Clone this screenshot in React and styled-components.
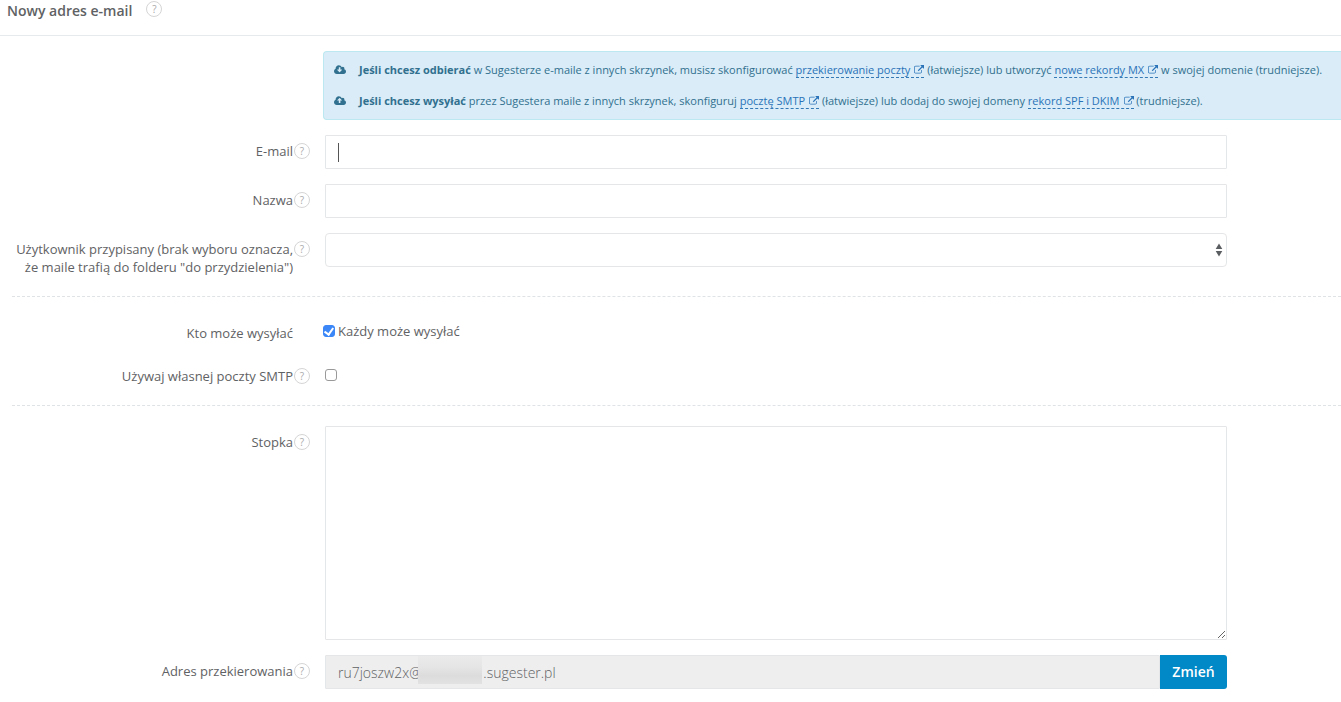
import React from "react";
import styled, { createGlobalStyle } from "styled-components";

const GlobalStyle = createGlobalStyle`
  * {
    box-sizing: border-box;
  }

  body {
    margin: 0;
    background: #fff;
    color: #5f6264;
    font-family: "Open Sans", "Liberation Sans", sans-serif;
    font-size: 13px;
    line-height: 18px;
    overflow-x: hidden;
  }
`;

const Header = styled.header`
  display: flex;
  align-items: flex-start;
  gap: 14px;
  height: 36px;
  padding: 1px 7px;
  border-bottom: 1px solid #e7eaec;
`;

const Title = styled.h1`
  margin: 0;
  font-size: 14px;
  font-weight: 600;
  line-height: 20px;
`;

const HelpButton = styled.button`
  flex: none;
  width: 16px;
  height: 16px;
  padding: 0;
  border: 1px solid #d5d5d5;
  border-radius: 50%;
  background: #fff;
  color: #aaa;
  font-family: inherit;
  font-size: 10px;
  line-height: 14px;
  text-align: center;
  cursor: help;
`;

const Form = styled.form`
  display: flex;
  flex-direction: column;
  gap: 15px;
  padding-top: 15px;
`;

const Alert = styled.section`
  display: flex;
  flex-direction: column;
  gap: 13px;
  margin-left: 323px;
  padding: 9px 0 9px 10px;
  border: 1px solid #bce8f1;
  border-right: none;
  border-radius: 4px 0 0 4px;
  background: #d9ecf7;
  color: #31708f;
  font-size: 11px;
  white-space: nowrap;
`;

const AlertLine = styled.p`
  display: flex;
  align-items: center;
  gap: 13px;
  margin: 0;
`;

const CloudSvg = styled.svg`
  flex: none;
  width: 12px;
  height: 12px;
  fill: currentColor;
`;

const AlertLink = styled.a`
  border-bottom: 1px dashed #337ab7;
  color: #2a73b9;
  text-decoration: none;
`;

const ExternalSvg = styled.svg`
  width: 10px;
  height: 10px;
  margin-left: 4px;
  fill: currentColor;
  vertical-align: -1px;
`;

const Row = styled.div`
  display: grid;
  grid-template-columns: 310px minmax(0, 1fr);
  column-gap: 15px;
  align-items: start;
  min-height: ${(props) => (props.$minHeight ? `${props.$minHeight}px` : "0")};
  padding-right: 114px;
`;

const LabelCell = styled.div`
  display: flex;
  justify-content: flex-end;
  align-items: flex-start;
  gap: 1px;
  padding-top: 7px;
  padding-left: 12px;
  padding-right: ${(props) => (props.$noHelp ? "17px" : "0")};
  text-align: right;

  ${HelpButton} {
    margin-top: 1px;
  }
`;

const TextInput = styled.input`
  display: block;
  width: 100%;
  height: 34px;
  padding: 6px 12px;
  border: 1px solid #e5e6e7;
  border-radius: 1px;
  outline: none;
  background: #fff;
  color: inherit;
  font-family: inherit;
  font-size: 14px;
`;

const CaretWrap = styled.div`
  position: relative;
`;

const EmailInput = styled(TextInput)`
  caret-color: ${(props) => (props.$empty ? "transparent" : "auto")};
`;

const Caret = styled.span`
  position: absolute;
  top: 8px;
  left: 13px;
  width: 1px;
  height: 19px;
  background: #555;
  pointer-events: none;
`;

const TextArea = styled.textarea`
  display: block;
  width: 100%;
  height: 214px;
  padding: 6px 12px;
  border: 1px solid #e5e6e7;
  border-radius: 1px;
  outline: none;
  color: inherit;
  font-family: inherit;
  font-size: 14px;
`;

const SelectWrap = styled.div`
  position: relative;
`;

const Select = styled.select`
  display: block;
  width: 100%;
  height: 34px;
  padding: 6px 12px;
  border: 1px solid #e5e6e7;
  border-radius: 4px;
  outline: none;
  background: #fff;
  color: inherit;
  font-family: inherit;
  font-size: 14px;
  appearance: none;
`;

const SelectArrows = styled.svg`
  position: absolute;
  top: 10px;
  right: 4px;
  width: 8px;
  height: 14px;
  fill: #5b5e60;
  pointer-events: none;
`;

const CheckCell = styled.div`
  display: flex;
  align-items: center;
  gap: 3px;
  padding-top: ${(props) => (props.$inline ? "5px" : "9px")};
  margin-left: ${(props) => (props.$inline ? "-2px" : "0")};
`;

const Checkbox = styled.input`
  display: grid;
  place-items: center;
  flex: none;
  width: 12px;
  height: 12px;
  margin: 0;
  border: 1px solid #999;
  border-radius: 3px;
  background: #fff;
  appearance: none;

  &:checked {
    border-color: #3b87f7;
    background: #3b87f7;
  }

  &:checked::before {
    content: "";
    width: 4px;
    height: 7px;
    margin-bottom: 2px;
    border: solid #fff;
    border-width: 0 2px 2px 0;
    transform: rotate(35deg);
  }
`;

const Divider = styled.hr`
  width: calc(100% - 12px);
  height: 1px;
  margin: 5px 0 5px 12px;
  border: none;
  border-top: 1px dashed #e0e3e5;
`;

const InputGroup = styled.div`
  position: relative;
  display: flex;
`;

const ReadOnlyInput = styled(TextInput)`
  flex: 1;
  background: #eee;
  font-weight: 300;
`;

// hides the account name in the middle of the address
const Redaction = styled.span`
  position: absolute;
  top: 1px;
  left: 93px;
  width: 64px;
  height: 28px;
  background: linear-gradient(#ebebeb, #e5e5e5 40%, #dcdcdc 70%, #e2e2e2);
`;

const ChangeButton = styled.button`
  flex: none;
  width: 67px;
  height: 34px;
  padding: 0;
  border: none;
  border-radius: 0 3px 3px 0;
  background: #0088c7;
  color: #fff;
  font-family: inherit;
  font-size: 14px;
  font-weight: 600;
  line-height: 18px;
  cursor: pointer;
`;

const CLOUD =
  "M1856 1152q0 159-112.5 271.5t-271.5 112.5h-1088q-185 0-316.5-131.5t-131.5-316.5q0-130 70-240t188-165q-2-30-2-43 0-212 150-362t362-150q156 0 285.5 87t188.5 231q71-62 166-62 106 0 181 75t75 181q0 76-41 138 130 31 213.5 135.5t83.5 238.5z";
const ARROW_DOWN =
  "M1216 864q0-14-9-23t-23-9h-224v-352q0-13-9.5-22.5t-22.5-9.5h-192q-13 0-22.5 9.5t-9.5 22.5v352h-224q-13 0-22.5 9.5t-9.5 22.5q0 14 9 23l352 352q9 9 23 9t23-9l351-351q10-12 10-24z";
const ARROW_UP =
  "M1216 800q0-14-9-23l-352-352q-9-9-23-9t-23 9l-351 351q-10 12-10 24 0 14 9 23t23 9h224v352q0 13 9.5 22.5t22.5 9.5h192q13 0 22.5-9.5t9.5-22.5v-352h224q13 0 22.5-9.5t9.5-22.5z";

const CloudIcon = ({ arrow }) => (
  <CloudSvg viewBox="-64 0 1920 1792" aria-hidden="true">
    <path fillRule="evenodd" d={CLOUD + arrow} />
  </CloudSvg>
);

const External = ({ children }) => (
  <AlertLink href="#">
    {children}
    <ExternalSvg viewBox="0 0 1792 1792" aria-hidden="true">
      <path d="M1408 928v320q0 119-84.5 203.5t-203.5 84.5h-832q-119 0-203.5-84.5t-84.5-203.5v-832q0-119 84.5-203.5t203.5-84.5h704q14 0 23 9t9 23v64q0 14-9 23t-23 9h-704q-66 0-113 47t-47 113v832q0 66 47 113t113 47h832q66 0 113-47t47-113v-320q0-14 9-23t23-9h64q14 0 23 9t9 23zm384-864v512q0 26-19 45t-45 19-45-19l-176-176-652 652q-10 10-23 10t-23-10l-114-114q-10-10-10-23t10-23l652-652-176-176q-19-19-19-45t19-45 45-19h512q26 0 45 19t19 45z" />
    </ExternalSvg>
  </AlertLink>
);

const Help = () => (
  <HelpButton type="button" aria-label="Pomoc">
    ?
  </HelpButton>
);

const Field = ({ id, label, noHelp, minHeight, children }) => (
  <Row $minHeight={minHeight}>
    <LabelCell $noHelp={noHelp}>
      <label htmlFor={id}>{label}</label>
      {!noHelp && <Help />}
    </LabelCell>
    {children}
  </Row>
);

const App = () => {
  const [email, setEmail] = React.useState("");
  const [focused, setFocused] = React.useState(true);
  const [everyone, setEveryone] = React.useState(true);
  const [ownSmtp, setOwnSmtp] = React.useState(false);

  return (
    <>
      <GlobalStyle />
      <Header>
        <Title>Nowy adres e-mail</Title>
        <Help />
      </Header>
      <Form onSubmit={(e) => e.preventDefault()}>
        <Alert>
          <AlertLine>
            <CloudIcon arrow={ARROW_DOWN} />
            <span>
              <b>Jeśli chcesz odbierać</b> w Sugesterze e-maile z innych
              skrzynek, musisz skonfigurować{" "}
              <External>przekierowanie poczty</External> (łatwiejsze) lub
              utworzyć <External>nowe rekordy MX</External> w swojej domenie
              (trudniejsze).
            </span>
          </AlertLine>
          <AlertLine>
            <CloudIcon arrow={ARROW_UP} />
            <span>
              <b>Jeśli chcesz wysyłać</b> przez Sugestera maile z innych
              skrzynek, skonfiguruj <External>pocztę SMTP</External>{" "}
              (łatwiejsze) lub dodaj do swojej domeny{" "}
              <External>rekord SPF i DKIM</External> (trudniejsze).
            </span>
          </AlertLine>
        </Alert>

        <Field id="email" label="E-mail">
          <CaretWrap>
            <EmailInput
              id="email"
              type="text"
              autoFocus
              value={email}
              $empty={email === ""}
              onChange={(e) => setEmail(e.target.value)}
              onFocus={() => setFocused(true)}
              onBlur={() => setFocused(false)}
            />
            {focused && email === "" && <Caret />}
          </CaretWrap>
        </Field>
        <Field id="name" label="Nazwa">
          <TextInput id="name" type="text" />
        </Field>
        <Field
          id="user"
          label={
            <>
              Użytkownik przypisany (brak wyboru oznacza,
              <br />
              że maile trafią do folderu "do przydzielenia")
            </>
          }
        >
          <SelectWrap>
            <Select id="user">
              <option value=""></option>
            </Select>
            <SelectArrows viewBox="0 0 8 14" aria-hidden="true">
              <path d="M4 0.5L7.3 6H0.7zM4 13.5L7.3 8H0.7z" />
            </SelectArrows>
          </SelectWrap>
        </Field>

        <Divider />

        <Field id="everyone" label="Kto może wysyłać" noHelp minHeight={28}>
          <CheckCell $inline>
            <Checkbox
              id="everyone"
              type="checkbox"
              checked={everyone}
              onChange={() => setEveryone(!everyone)}
            />
            <label htmlFor="everyone">Każdy może wysyłać</label>
          </CheckCell>
        </Field>
        <Field id="smtp" label="Używaj własnej poczty SMTP">
          <CheckCell>
            <Checkbox
              id="smtp"
              type="checkbox"
              checked={ownSmtp}
              onChange={() => setOwnSmtp(!ownSmtp)}
            />
          </CheckCell>
        </Field>

        <Divider />

        <Field id="footer" label="Stopka">
          <TextArea id="footer" />
        </Field>
        <Field id="redirect" label="Adres przekierowania">
          <InputGroup>
            <ReadOnlyInput
              id="redirect"
              type="text"
              readOnly
              value={`ru7joszw2x@${"\u00a0".repeat(17)}.sugester.pl`}
            />
            <Redaction />
            <ChangeButton type="button">Zmień</ChangeButton>
          </InputGroup>
        </Field>
      </Form>
    </>
  );
};

export default App;
